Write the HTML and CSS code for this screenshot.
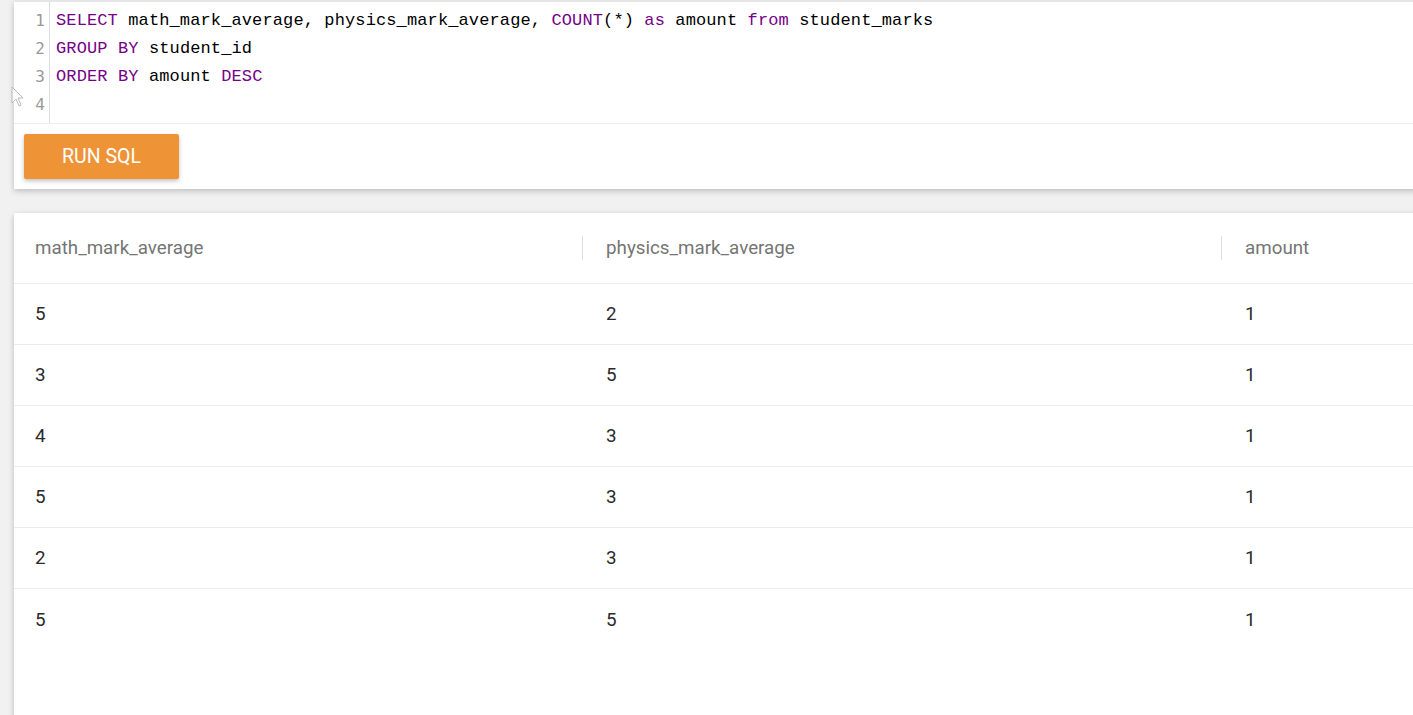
FILE: index.html
```html
<!DOCTYPE html>
<html>
<head>
<meta charset="utf-8">
<link rel="stylesheet" href="styles.css">
</head>
<body>
<div class="page">
  <section class="card editor-card">
    <div class="editor">
      <div class="gutter">
        <div class="ln">1</div>
        <div class="ln">2</div>
        <div class="ln">3</div>
        <div class="ln">4</div>
      </div>
      <div class="code">
        <div class="line"><span class="kw">SELECT</span> math_mark_average, physics_mark_average, <span class="kw">COUNT</span>(*) <span class="kw">as</span> amount <span class="kw">from</span> student_marks</div>
        <div class="line"><span class="kw">GROUP</span> <span class="kw">BY</span> student_id</div>
        <div class="line"><span class="kw">ORDER</span> <span class="kw">BY</span> amount <span class="kw">DESC</span></div>
        <div class="line">&nbsp;</div>
      </div>
    </div>
    <div class="actions">
      <button class="run-btn">RUN SQL</button>
    </div>
  </section>

  <section class="card table-card">
    <div class="row head">
      <div class="cell c1">math_mark_average</div>
      <div class="cell c2">physics_mark_average</div>
      <div class="cell c3">amount</div>
    </div>
    <div class="row"><div class="cell c1">5</div><div class="cell c2">2</div><div class="cell c3">1</div></div>
    <div class="row"><div class="cell c1">3</div><div class="cell c2">5</div><div class="cell c3">1</div></div>
    <div class="row"><div class="cell c1">4</div><div class="cell c2">3</div><div class="cell c3">1</div></div>
    <div class="row"><div class="cell c1">5</div><div class="cell c2">3</div><div class="cell c3">1</div></div>
    <div class="row"><div class="cell c1">2</div><div class="cell c2">3</div><div class="cell c3">1</div></div>
    <div class="row last"><div class="cell c1">5</div><div class="cell c2">5</div><div class="cell c3">1</div></div>
  </section>
</div>
<svg class="cursor" width="14" height="22" viewBox="0 0 14 22"><path d="M1 1 L1 17 L5 13 L8 20 L10 19 L7 12 L12 12 Z" fill="#fff" stroke="#b8b8b8" stroke-width="1"/></svg>
</body>
</html>
```

FILE: styles.css
```css
html, body {
  margin: 0;
  padding: 0;
  overflow: hidden;
  background: #f1f1f1;
  height: 715px;
}
.page {
  padding: 1px 0 0 14px;
  width: 1420px;
}
.card {
  background: #fff;
  box-shadow: 0 2px 6px rgba(0,0,0,0.22);
}
.editor-card {
  border-top: 1px solid #e6e6e6;
}
.editor {
  display: flex;
  border-bottom: 1px solid #ececec;
}
.gutter {
  width: 36px;
  border-right: 1px solid #dcdcdc;
  padding: 5px 0 4px 0;
  box-sizing: border-box;
  text-align: right;
}
.ln {
  height: 28px;
  line-height: 28px;
  font-family: "DejaVu Sans Mono", monospace;
  font-size: 16px;
  color: #999;
  padding-right: 4px;
}
.code {
  padding: 5px 0 3px 6px;
  font-family: "Liberation Mono", monospace;
  font-size: 17px;
  letter-spacing: 0.12px;
  color: #000;
}
.line {
  height: 28px;
  line-height: 28px;
  white-space: pre;
}
.kw { color: #708; }
.actions {
  padding: 10px 10px 10px 10px;
}
.run-btn {
  display: block;
  width: 155px;
  height: 45px;
  border: none;
  border-radius: 2px;
  background: #ee9436;
  color: #fff;
  font-family: Roboto, sans-serif;
  font-size: 19.5px;
  font-weight: 400;
  box-shadow: 0 2px 4px rgba(0,0,0,0.25);
  padding: 0;
}
.table-card {
  margin-top: 24px;
  height: 520px;
}
.row {
  display: flex;
  height: 61px;
  align-items: center;
  border-bottom: 1px solid #ececec;
  box-sizing: border-box;
  font-family: Roboto, sans-serif;
  font-size: 18.8px;
  color: #2a2a2a;
}
.row.last {
  border-bottom: none;
}
.row.head {
  height: 71px;
  color: #757575;
}
.cell {
  box-sizing: border-box;
  padding-left: 21px;
}
.c1 { width: 568px; }
.c2 { width: 639px; padding-left: 24px; }
.c3 { padding-left: 24px; }
.head .c2, .head .c3 {
  border-left: 1px solid #dedede;
  line-height: 24px;
}
.head .c2 { padding-left: 23px; }
.head .c3 { padding-left: 23px; }
.cursor {
  position: absolute;
  left: 11px;
  top: 86px;
}
```
